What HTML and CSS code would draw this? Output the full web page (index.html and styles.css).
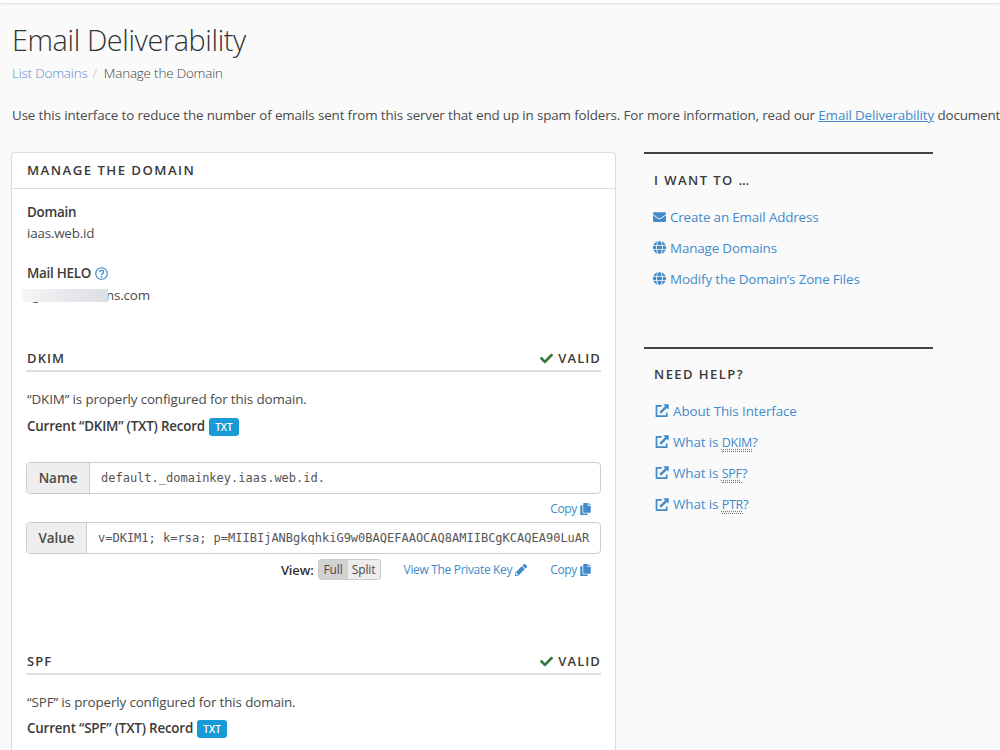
FILE: index.html
```html
<!DOCTYPE html>
<html lang="en">
<head>
<meta charset="utf-8">
<title>Email Deliverability</title>
<link rel="stylesheet" href="styles.css">
</head>
<body>
<svg class="sprite" aria-hidden="true">
  <symbol id="check" viewBox="0 0 512 512"><path d="M173.898 439.404l-166.4-166.4c-9.997-9.997-9.997-26.206 0-36.204l36.203-36.204c9.997-9.998 26.207-9.998 36.204 0L192 312.69 432.095 72.596c9.997-9.997 26.207-9.997 36.204 0l36.203 36.204c9.997 9.997 9.997 26.206 0 36.204l-294.4 294.401c-9.998 9.997-26.207 9.997-36.204-.001z"/></symbol>
  <symbol id="copy" viewBox="0 0 448 512"><path d="M320 448v40c0 13.255-10.745 24-24 24H24c-13.255 0-24-10.745-24-24V120c0-13.255 10.745-24 24-24h72v296c0 30.879 25.121 56 56 56h168zm0-344V0H152c-13.255 0-24 10.745-24 24v368c0 13.255 10.745 24 24 24h272c13.255 0 24-10.745 24-24V128H344c-13.2 0-24-10.8-24-24zm121-31L375 7A24 24 0 0 0 358 0h-6v96h96v-6a24 24 0 0 0-7-17z"/></symbol>
  <symbol id="pencil" viewBox="0 0 512 512"><path d="M498 142l-46 46c-5 5-12 5-17 0L324 77c-5-5-5-12 0-17l46-46c19-19 49-19 68 0l60 60c19 19 19 49 0 68zM284 100L22 362 0 484c-3 16 12 30 28 28l122-22 262-262c5-5 5-12 0-17L301 100c-5-5-12-5-17 0zM88 424h48v36l-65 12-31-31 12-65h36z"/></symbol>
  <symbol id="envelope" viewBox="0 64 512 384"><path d="M502 191c4-3 10 0 10 5v204c0 27-21 48-48 48H48c-27 0-48-21-48-48V196c0-5 6-8 10-5 22 17 52 40 155 114 21 15 57 48 91 48s70-33 91-48c103-74 133-97 155-114zM256 320c23 0 57-29 74-42 133-96 143-105 174-128 5-4 8-11 8-18v-20c0-27-21-48-48-48H48c-27 0-48 21-48 48v20c0 7 3 14 8 18 31 23 41 32 174 128 17 13 51 42 74 42z"/></symbol>
  <symbol id="globe" viewBox="0 8 496 496"><path d="M336 160C322 71 288 8 248 8s-74 63-88 152h176zm-184 96c0 22 1 44 3 64h185c2-20 4-42 4-64s-2-44-4-64H155c-2 20-3 42-3 64zm325-96C448 92 390 39 319 17c24 34 41 85 50 143h108zM177 17C106 39 48 92 19 160h108c9-58 26-109 50-143zm310 175H373c2 21 3 43 3 64s-1 43-3 64h114c5-20 9-42 9-64s-4-44-9-64zM120 256c0-21 1-43 3-64H9c-5 20-9 42-9 64s4 44 9 64h114c-2-21-3-43-3-64zm40 96c14 89 48 152 88 152s74-63 88-152H160zm159 143c71-22 129-75 158-143H369c-9 58-26 109-50 143zM19 352c29 68 87 121 158 143-24-34-41-85-50-143H19z"/></symbol>
  <symbol id="external" viewBox="0 0 14 14"><path d="M6.700 1.800H1.500v10.400h10.200V8.400" fill="none" stroke="currentColor" stroke-width="1.700"/><path d="M8.200.3h5.500v5.500l-1.800-1.700-5.800 5.700-1.700-1.700L10.100 2.200z"/></symbol>
</svg>
<div class="topbar"></div>
<main class="page">
  <h1 class="title">Email Deliverability</h1>
  <nav class="crumbs"><a class="link crumb-link">List Domains</a><span class="slash">/</span><span>Manage the Domain</span></nav>
  <p class="intro">Use this interface to reduce the number of emails sent from this server that end up in spam folders. For more information, read our <a class="link underlined">Email Deliverability</a> document</p>
  <div class="columns">
    <section class="card">
      <h2 class="card-head">MANAGE THE DOMAIN</h2>
      <div class="card-body">
        <div class="label">Domain</div>
        <div class="value">iaas.web.id</div>
        <div class="label helo">Mail HELO
          <svg class="help" viewBox="0 0 14 14"><circle cx="7" cy="7" r="6.200" fill="none" stroke="currentColor" stroke-width="1.300"/><path d="M4.900 5.500C5.100 3 9.200 3 9.200 5.500C9.200 7 7.100 6.900 7.100 8.600" fill="none" stroke="currentColor" stroke-width="1.500"/><circle cx="7.100" cy="10.500" r=".95"/></svg>
        </div>
        <div class="value masked"><span class="masked-g">g</span><span class="domain-end">ns.com</span><span class="mask"></span></div>
        <div class="section-head"><span>DKIM</span><span class="valid"><svg class="check"><use href="#check"/></svg>VALID</span></div>
        <p class="status">“DKIM” is properly configured for this domain.</p>
        <div class="record"><span class="record-name">Current “DKIM” (TXT) Record</span><span class="badge">TXT</span></div>
        <div class="field"><span class="addon">Name</span><span class="code">default._domainkey.iaas.web.id.</span></div>
        <div class="actions"><a class="link action">Copy<svg class="copy"><use href="#copy"/></svg></a></div>
        <div class="field"><span class="addon addon-value">Value</span><span class="code">v=DKIM1; k=rsa; p=MIIBIjANBgkqhkiG9w0BAQEFAAOCAQ8AMIIBCgKCAQEA90LuAR</span></div>
        <div class="actions actions-view">
          <span class="view">View:</span><span class="toggle"><span class="on">Full</span><span class="off">Split</span></span>
          <a class="link action private">View The Private Key<svg class="pencil"><use href="#pencil"/></svg></a>
          <a class="link action">Copy<svg class="copy"><use href="#copy"/></svg></a>
        </div>
        <div class="section-head second"><span>SPF</span><span class="valid"><svg class="check"><use href="#check"/></svg>VALID</span></div>
        <p class="status">“SPF” is properly configured for this domain.</p>
        <div class="record record-last"><span class="record-name">Current “SPF” (TXT) Record</span><span class="badge">TXT</span></div>
      </div>
    </section>
    <aside class="side">
      <section class="panel">
        <h3 class="panel-head">I WANT TO …</h3>
        <a class="link item"><svg class="mail"><use href="#envelope"/></svg>Create an Email Address</a>
        <a class="link item"><svg class="globe"><use href="#globe"/></svg>Manage Domains</a>
        <a class="link item"><svg class="globe"><use href="#globe"/></svg>Modify the Domain’s Zone Files</a>
      </section>
      <section class="panel help-panel">
        <h3 class="panel-head">NEED HELP?</h3>
        <a class="link item"><svg class="ext"><use href="#external"/></svg>About This Interface</a>
        <a class="link item"><svg class="ext"><use href="#external"/></svg><span>What is <abbr class="abbr">DKIM</abbr>?</span></a>
        <a class="link item"><svg class="ext"><use href="#external"/></svg><span>What is <abbr class="abbr">SPF</abbr>?</span></a>
        <a class="link item"><svg class="ext"><use href="#external"/></svg><span>What is <abbr class="abbr">PTR</abbr>?</span></a>
      </section>
    </aside>
  </div>
</main>
</body>
</html>
```
FILE: styles.css
```css
* { box-sizing: border-box; }
body { margin: 0; height: 750px; overflow: hidden; background: #fafafa; color: #4a4a4a; font: 13.4px/20px "Open Sans", sans-serif; letter-spacing: -.135px; }
h1, h2, h3, p { margin: 0; }
svg { fill: currentColor; flex: none; }
.sprite { display: none; }
.topbar { height: 3px; background: #fff; box-shadow: 0 1px 2px #ddd; }
.page { padding: 17px 0 0 12px; }
.title { font-size: 28.8px; line-height: 40px; font-weight: 300; letter-spacing: -.37px; color: #333; white-space: nowrap; }
.link { color: #428bca; text-decoration: none; }
.crumbs { display: flex; height: 20px; margin-top: 3px; font-weight: 300; letter-spacing: -.17px; color: #444; white-space: nowrap; }
.crumb-link { color: #5b8fd0; }
.slash { margin: 0 7px 0 5px; color: #bbb; }
.intro { margin-top: 22px; white-space: nowrap; }
.underlined { text-decoration: underline; }
.columns { display: flex; align-items: flex-start; gap: 28px; margin: 27px 0 0 -1px; }
.card { width: 605px; height: 598px; border: 1px solid #ddd; border-bottom: 0; border-radius: 4px 4px 0 0; background: #fff; box-shadow: 0 1px 2px #0001; }
.card-head { height: 36px; padding-left: 15px; border-bottom: 1px solid #ddd; font-size: 13.2px; line-height: 34px; font-weight: 600; letter-spacing: 1.45px; color: #3a3a3a; }
.card-body { padding: 13px 14px 0; }
.label { height: 20px; padding-left: 1px; font-weight: 600; letter-spacing: -.25px; color: #3a3a3a; }
.value { height: 20px; margin-top: 1px; padding-left: 1px; letter-spacing: -.2px; }
.helo { display: flex; align-items: center; gap: 4px; margin-top: 20px; }
.help { width: 13px; height: 13px; color: #428bca; }
.masked { position: relative; margin-top: 2px; padding-left: 6px; }
.domain-end { margin-left: 67px; }
.mask { position: absolute; left: -4px; top: 4px; width: 86px; height: 13px; background: linear-gradient(90deg, #f6f6f8, #e8e8ec 50%, #dedfe4); }
.section-head { display: flex; justify-content: space-between; height: 24px; margin-top: 43px; padding-left: 1px; border-bottom: 2px solid #ddd; font-size: 13px; font-weight: 600; letter-spacing: 1.1px; color: #3a3a3a; line-height: 20px; }
.valid { display: flex; align-items: center; gap: 5px; height: 20px; }
.check { width: 13px; height: 13px; color: #36783d; }
.status { margin-top: 17px; padding-left: 1px; }
.record { display: flex; align-items: center; gap: 4px; height: 20px; margin-top: 7px; padding-left: 1px; font-weight: 600; letter-spacing: -.19px; color: #3a3a3a; }
.record-last { margin-top: 6px; }
.badge { width: 30px; height: 18px; margin-top: 1px; border-radius: 3px; background: #179bd7; color: #fff; font-size: 10px; line-height: 18px; letter-spacing: 0; text-align: center; }
.field { display: flex; height: 32px; margin-top: 26px; border: 1px solid #ccc; border-radius: 4px; overflow: hidden; }
.addon { width: 63px; background: #eee; border-right: 1px solid #ccc; text-align: center; font-weight: 600; letter-spacing: 0; line-height: 30px; }
.addon-value { width: 60px; }
.code { padding-left: 11px; font: 12px/30px "DejaVu Sans Mono", monospace; letter-spacing: 0; color: #555; white-space: pre; }
.actions { display: flex; justify-content: flex-end; align-items: center; height: 28px; padding: 1px 10px 0 0; font-size: 12px; }
.actions + .field { margin-top: 0; }
.action { display: flex; align-items: center; gap: 3px; white-space: nowrap; letter-spacing: -.33px; }
.copy { width: 11px; height: 12px; }
.pencil { width: 12px; height: 12px; }
.view { margin-right: 4px; font-size: 13px; font-weight: 600; color: #333; }
.actions-view { height: 31px; padding-top: 0; }
.toggle { display: flex; height: 21px; margin-right: 23px; border: 1px solid #ccc; border-radius: 3px; background: #ededed; line-height: 19px; }
.on { width: 29px; background: #d2d2d2; text-align: center; }
.off { width: 32px; text-align: center; }
.private { margin-right: 23px; }
.second { margin-top: 66px; }
.side { width: 289px; }
.panel { height: 195px; padding: 16px 0 0 9px; border-top: 2px solid #444; }
.panel-head { height: 20px; margin-bottom: 11px; padding-left: 1px; font-size: 13px; font-weight: 600; letter-spacing: 1.45px; color: #3a3a3a; }
.item { display: flex; align-items: center; gap: 4px; height: 31.2px; padding-left: 1px; white-space: nowrap; letter-spacing: -.15px; }
.help-panel { padding-top: 15px; }
.help-panel .item { height: 31.4px; letter-spacing: -.09px; }
.mail { width: 13px; height: 10px; }
.mail, .globe { margin-left: -1px; }
.globe { width: 13px; height: 13px; }
.ext { width: 14px; height: 14px; margin-left: 1px; }
.abbr { font-size: 12.5px; letter-spacing: -.3px; border-bottom: 1px dotted #777; text-decoration: underline dotted; text-underline-offset: 2px; }
```
